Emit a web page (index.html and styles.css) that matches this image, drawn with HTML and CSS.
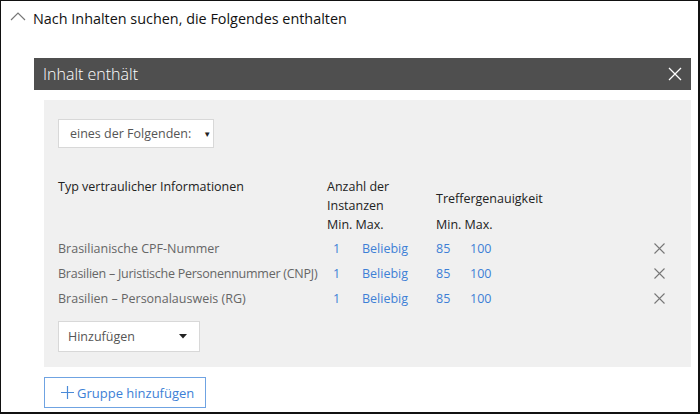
FILE: index.html
```html
<!DOCTYPE html>
<html lang="de">
<head>
<meta charset="utf-8">
<link rel="stylesheet" href="styles.css">
</head>
<body>
<div class="frame">
  <div class="heading">
    <svg class="chev" width="16" height="10" viewBox="0 0 16 10"><polyline points="1,9 8,2 15,9" fill="none" stroke="#777" stroke-width="1.2"/></svg>
    <span>Nach Inhalten suchen, die Folgendes enthalten</span>
  </div>
  <div class="section">
    <div class="bar">
      <span class="bar-title">Inhalt enthält</span>
      <svg class="bar-close" width="14" height="14" viewBox="0 0 14 14"><path d="M1 1L13 13M13 1L1 13" stroke="#fff" stroke-width="1.3"/></svg>
    </div>
    <div class="group">
      <div class="panel">
        <div class="select select-any">
          <span>eines der Folgenden:</span>
          <span class="tri-small">▼</span>
        </div>
        <div class="thead">
          <div class="col-name">Typ vertraulicher Informationen</div>
          <div class="col-inst">
            <div>Anzahl der</div>
            <div>Instanzen</div>
            <div>Min. Max.</div>
          </div>
          <div class="col-acc">
            <div class="acc-title">Treffergenauigkeit</div>
            <div>Min. Max.</div>
          </div>
        </div>
        <div class="rows">
          <div class="row">
            <div class="c-name">Brasilianische CPF-Nummer</div>
            <div class="c-min link">1</div>
            <div class="c-max link">Beliebig</div>
            <div class="c-amin link">85</div>
            <div class="c-amax link">100</div>
            <svg class="c-x" width="11" height="11" viewBox="0 0 11 11"><path d="M0.5 0.5L10.5 10.5M10.5 0.5L0.5 10.5" stroke="#777" stroke-width="1.1"/></svg>
          </div>
          <div class="row">
            <div class="c-name c-narrow">Brasilien – Juristische Personennummer (CNPJ)</div>
            <div class="c-min link">1</div>
            <div class="c-max link">Beliebig</div>
            <div class="c-amin link">85</div>
            <div class="c-amax link">100</div>
            <svg class="c-x" width="11" height="11" viewBox="0 0 11 11"><path d="M0.5 0.5L10.5 10.5M10.5 0.5L0.5 10.5" stroke="#777" stroke-width="1.1"/></svg>
          </div>
          <div class="row">
            <div class="c-name">Brasilien – Personalausweis (RG)</div>
            <div class="c-min link">1</div>
            <div class="c-max link">Beliebig</div>
            <div class="c-amin link">85</div>
            <div class="c-amax link">100</div>
            <svg class="c-x" width="11" height="11" viewBox="0 0 11 11"><path d="M0.5 0.5L10.5 10.5M10.5 0.5L0.5 10.5" stroke="#777" stroke-width="1.1"/></svg>
          </div>
        </div>
        <div class="select select-add">
          <span>Hinzufügen</span>
          <svg class="tri" width="8" height="5" viewBox="0 0 8 5"><polygon points="0,0 8,0 4,4.5" fill="#222"/></svg>
        </div>
      </div>
      <div class="btn-group">
        <svg width="13" height="13" viewBox="0 0 13 13"><path d="M6.5 0V13M0 6.5H13" stroke="#4a8ad8" stroke-width="1.2"/></svg>
        <span>Gruppe hinzufügen</span>
      </div>
    </div>
  </div>
</div>
</body>
</html>
```
FILE: styles.css
```css
* { box-sizing: border-box; }
html, body { margin: 0; padding: 0; background: #fff; }
body {
  font-family: "Open Sans", "Noto Sans", sans-serif;
  color: #222;
}
.frame {
  width: 700px;
  height: 414px;
  border-top: 1px solid #111;
  border-left: 1px solid #111;
  border-right: 2px solid #111;
  border-bottom: 2px solid #111;
  overflow: hidden;
}
.heading {
  display: flex;
  align-items: center;
  height: 34px;
  padding-left: 9px;
  font-size: 14.4px;
  color: #111;
}
.heading .chev { margin-right: 7px; margin-top: -4px; }
.section {
  margin: 23px 7px 0 33px;
}
.bar {
  height: 32px;
  background: #4f4f4f;
  display: flex;
  align-items: center;
  justify-content: space-between;
  padding: 0 9px 0 9px;
}
.bar-title {
  color: #fff;
  font-size: 16px;
  font-weight: 300;
}
.group {
  padding-left: 10px;
}
.panel {
  margin-top: 10px;
  background: #f0f0f0;
  padding: 19px 14px 15px 14px;
  font-size: 12.5px;
}
.select {
  background: #fff;
  border: 1px solid #d8d8d8;
  display: flex;
  align-items: center;
  color: #555;
}
.select-any {
  width: 156px;
  height: 29px;
  padding-left: 11px;
  gap: 12px;
}
.tri-small { font-size: 8px; color: #222; }
.select-add {
  margin-top: 10px;
  width: 142px;
  height: 31px;
  padding: 0 12px 0 9px;
  justify-content: space-between;
}
.thead {
  display: flex;
  margin-top: 29px;
  line-height: 19px;
  color: #222;
}
.col-name { width: 269px; }
.col-inst { width: 109px; }
.col-acc {
  display: flex;
  flex-direction: column;
  justify-content: flex-end;
}
.acc-title { margin-bottom: 7px; }
.rows { margin-top: 2px; }
.row {
  display: flex;
  align-items: center;
  height: 25px;
  color: #666;
}
.c-name { width: 269px; white-space: nowrap; }
.c-narrow { letter-spacing: -0.25px; }
.link { color: #3d7fd6; }
.c-min { width: 35px; padding-left: 6px; }
.c-max { width: 74px; }
.c-amin { width: 34px; }
.c-amax { width: 184px; }
.btn-group {
  margin-top: 10px;
  width: 162px;
  height: 31px;
  border: 1px solid #6fa3e2;
  display: flex;
  align-items: center;
  padding-left: 16px;
  gap: 3px;
  font-size: 13px;
  color: #3d7fd6;
  background: #fff;
}
```
